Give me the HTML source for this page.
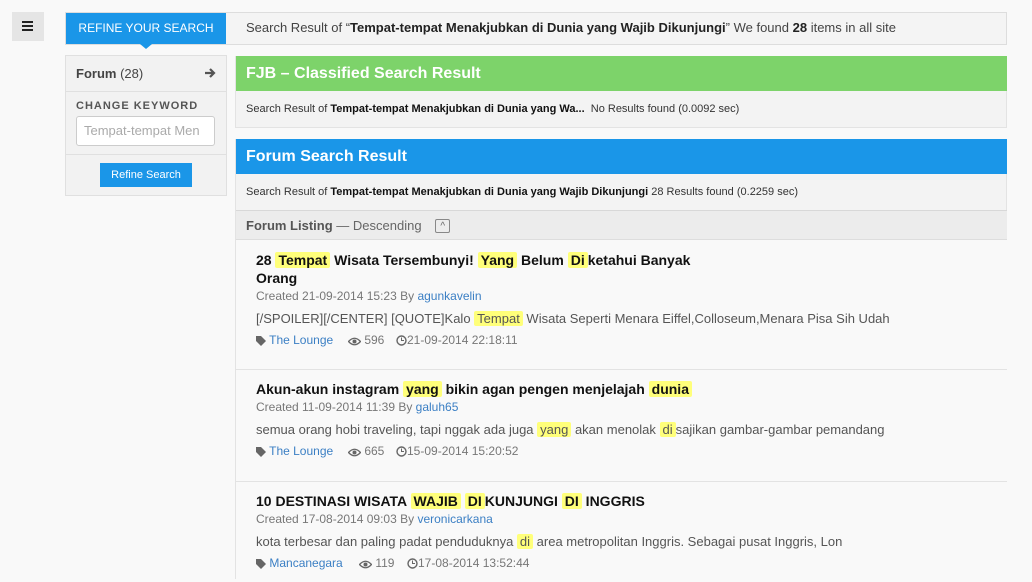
<!DOCTYPE html>
<html><head><meta charset="utf-8"><style>
*{box-sizing:border-box;margin:0;padding:0}
body{width:1032px;height:576px;overflow:hidden;background:#f9f9f9;font-family:"Liberation Sans",sans-serif;color:#444;position:relative}
.abs{position:absolute}
.hl{background:#ffff7a;padding:0 3px;border-radius:2px}
.blue{color:#3b7fc4}
.item{position:absolute;left:236px;width:771px;border-bottom:1px solid #e3e3e3;padding-left:20px}
.t{font-weight:bold;font-size:14px;color:#111;line-height:18px;width:460px}
.c{font-size:12px;color:#777;margin-top:2px}
.x{font-size:13px;color:#555;margin-top:8px}
.m{font-size:12px;color:#777;margin-top:7px;position:relative;height:16px}
.m span.a{position:absolute;left:0}
.m span.b{position:absolute;left:92px}
.m span.d{position:absolute;left:140px}
svg{vertical-align:-2px}
</style></head><body>
<div class="abs" style="left:12px;top:12px;width:32px;height:29px;background:#e5e5e5"></div>
<div class="abs" style="left:22px;top:21px;width:11px;height:2px;background:#222;box-shadow:0 4px 0 #222,0 8px 0 #222"></div>
<div class="abs" style="left:65px;top:12px;width:942px;height:33px;border:1px solid #ddd;background:#f4f4f4"></div>
<div class="abs" style="left:66px;top:13px;width:160px;height:31px;background:#1a96e8;color:#fff;font-size:12px;text-align:center;line-height:31px">REFINE YOUR SEARCH</div>
<div class="abs" style="left:140px;top:44px;width:0;height:0;border-left:6px solid transparent;border-right:6px solid transparent;border-top:5px solid #1a96e8"></div>
<div class="abs" style="left:246px;top:20px;font-size:13px;color:#444">Search Result of “<b style="color:#222">Tempat-tempat Menakjubkan di Dunia yang Wajib Dikunjungi</b>” We found <b style="color:#222">28</b> items in all site</div>

<div class="abs" style="left:65px;top:55px;width:162px;height:141px;background:#f2f2f2;border:1px solid #e0e0e0"></div>
<div class="abs" style="left:76px;top:66px;font-size:13px;color:#444"><b>Forum</b> (28)</div>
<svg class="abs" style="left:204px;top:67px" width="12" height="12" viewBox="0 0 12 12"><path d="M1 6H10M6 2L10 6L6 10" stroke="#555" stroke-width="2.2" fill="none"/></svg>
<div class="abs" style="left:66px;top:91px;width:160px;border-top:1px solid #e0e0e0"></div>
<div class="abs" style="left:76px;top:100px;font-size:11px;font-weight:bold;letter-spacing:1px;color:#555">CHANGE KEYWORD</div>
<div class="abs" style="left:76px;top:116px;width:139px;height:30px;background:#fff;border:1px solid #ccc;border-radius:3px;font-size:13px;color:#aaa;line-height:28px;padding-left:7px;overflow:hidden;white-space:nowrap">Tempat-tempat Men</div>
<div class="abs" style="left:66px;top:154px;width:160px;border-top:1px solid #e0e0e0"></div>
<div class="abs" style="left:100px;top:163px;width:92px;height:24px;background:#1a96e8;color:#fff;font-size:11px;text-align:center;line-height:24px">Refine Search</div>

<div class="abs" style="left:235px;top:56px;width:772px;height:72px;background:#f3f3f3;border:1px solid #e3e3e3"></div>
<div class="abs" style="left:236px;top:56px;width:771px;height:35px;background:#7dd36a;color:#fff;font-size:16px;font-weight:bold;line-height:35px;padding-left:10px">FJB – Classified Search Result</div>
<div class="abs" style="left:246px;top:103px;font-size:11px;color:#333">Search Result of <b style="color:#111">Tempat-tempat Menakjubkan di Dunia yang Wa...</b>&nbsp; No Results found (0.0092 sec)</div>

<div class="abs" style="left:235px;top:139px;width:772px;height:440px;background:#f3f3f3;border:1px solid #e3e3e3"></div>
<div class="abs" style="left:236px;top:139px;width:771px;height:35px;background:#1a96e8;color:#fff;font-size:16px;font-weight:bold;line-height:35px;padding-left:10px">Forum Search Result</div>
<div class="abs" style="left:246px;top:186px;font-size:11px;color:#333">Search Result of <b style="color:#111">Tempat-tempat Menakjubkan di Dunia yang Wajib Dikunjungi</b> 28 Results found (0.2259 sec)</div>
<div class="abs" style="left:236px;top:210px;width:771px;height:30px;background:#ececec;border-top:1px solid #d8d8d8;border-bottom:1px solid #ddd;font-size:13px;line-height:29px;padding-left:10px;color:#666"><b style="color:#555">Forum Listing</b> — Descending <span style="display:inline-block;width:15px;height:14px;border:1px solid #888;border-radius:2px;font-size:10px;line-height:13px;text-align:center;vertical-align:1px;margin-left:10px">^</span></div>

<div class="item" style="top:240px;height:130px;background:#f9f9f9;padding-top:11px">
<div class="t">28 <span class="hl">Tempat</span> Wisata Tersembunyi! <span class="hl">Yang</span> Belum <span class="hl">Di</span>ketahui Banyak Orang</div>
<div class="c">Created 21-09-2014 15:23 By <span class="blue">agunkavelin</span></div>
<div class="x">[/SPOILER][/CENTER] [QUOTE]Kalo <span class="hl">Tempat</span> Wisata Seperti Menara Eiffel,Colloseum,Menara Pisa Sih Udah</div>
<div class="m"><span class="a"><svg width="10" height="10" viewBox="0 0 10 10"><path d="M0 0H5L10 5L5 10L0 5Z" fill="#666"/></svg> <span class="blue">The Lounge</span></span><span class="b"><svg width="13" height="9" viewBox="0 0 13 9"><path d="M0.5 4.5Q6.5 -2 12.5 4.5Q6.5 11 0.5 4.5Z" fill="none" stroke="#666" stroke-width="1.3"/><circle cx="6.5" cy="4.5" r="2" fill="#666"/></svg> 596</span><span class="d"><svg width="11" height="11" viewBox="0 0 11 11"><circle cx="5.5" cy="5.5" r="4.5" fill="none" stroke="#666" stroke-width="1.4"/><path d="M5.5 2.5V5.5H8" stroke="#666" fill="none"/></svg>21-09-2014 22:18:11</span></div>
</div>
<div class="item" style="top:370px;height:112px;background:#f9f9f9;padding-top:10px">
<div class="t" style="width:700px">Akun-akun instagram <span class="hl">yang</span> bikin agan pengen menjelajah <span class="hl">dunia</span></div>
<div class="c">Created 11-09-2014 11:39 By <span class="blue">galuh65</span></div>
<div class="x">semua orang hobi traveling, tapi nggak ada juga <span class="hl">yang</span> akan menolak <span class="hl">di</span>sajikan gambar-gambar pemandang</div>
<div class="m"><span class="a"><svg width="10" height="10" viewBox="0 0 10 10"><path d="M0 0H5L10 5L5 10L0 5Z" fill="#666"/></svg> <span class="blue">The Lounge</span></span><span class="b"><svg width="13" height="9" viewBox="0 0 13 9"><path d="M0.5 4.5Q6.5 -2 12.5 4.5Q6.5 11 0.5 4.5Z" fill="none" stroke="#666" stroke-width="1.3"/><circle cx="6.5" cy="4.5" r="2" fill="#666"/></svg> 665</span><span class="d"><svg width="11" height="11" viewBox="0 0 11 11"><circle cx="5.5" cy="5.5" r="4.5" fill="none" stroke="#666" stroke-width="1.4"/><path d="M5.5 2.5V5.5H8" stroke="#666" fill="none"/></svg>15-09-2014 15:20:52</span></div>
</div>
<div class="item" style="top:482px;height:100px;background:#f9f9f9;padding-top:10px;border-bottom:0">
<div class="t" style="width:700px">10 DESTINASI WISATA <span class="hl">WAJIB</span> <span class="hl">DI</span>KUNJUNGI <span class="hl">DI</span> INGGRIS</div>
<div class="c">Created 17-08-2014 09:03 By <span class="blue">veronicarkana</span></div>
<div class="x">kota terbesar dan paling padat penduduknya <span class="hl">di</span> area metropolitan Inggris. Sebagai pusat Inggris, Lon</div>
<div class="m"><span class="a"><svg width="10" height="10" viewBox="0 0 10 10"><path d="M0 0H5L10 5L5 10L0 5Z" fill="#666"/></svg> <span class="blue">Mancanegara</span></span><span class="b" style="left:103px"><svg width="13" height="9" viewBox="0 0 13 9"><path d="M0.5 4.5Q6.5 -2 12.5 4.5Q6.5 11 0.5 4.5Z" fill="none" stroke="#666" stroke-width="1.3"/><circle cx="6.5" cy="4.5" r="2" fill="#666"/></svg> 119</span><span class="d" style="left:151px"><svg width="11" height="11" viewBox="0 0 11 11"><circle cx="5.5" cy="5.5" r="4.5" fill="none" stroke="#666" stroke-width="1.4"/><path d="M5.5 2.5V5.5H8" stroke="#666" fill="none"/></svg>17-08-2014 13:52:44</span></div>
</div>
</body></html>
